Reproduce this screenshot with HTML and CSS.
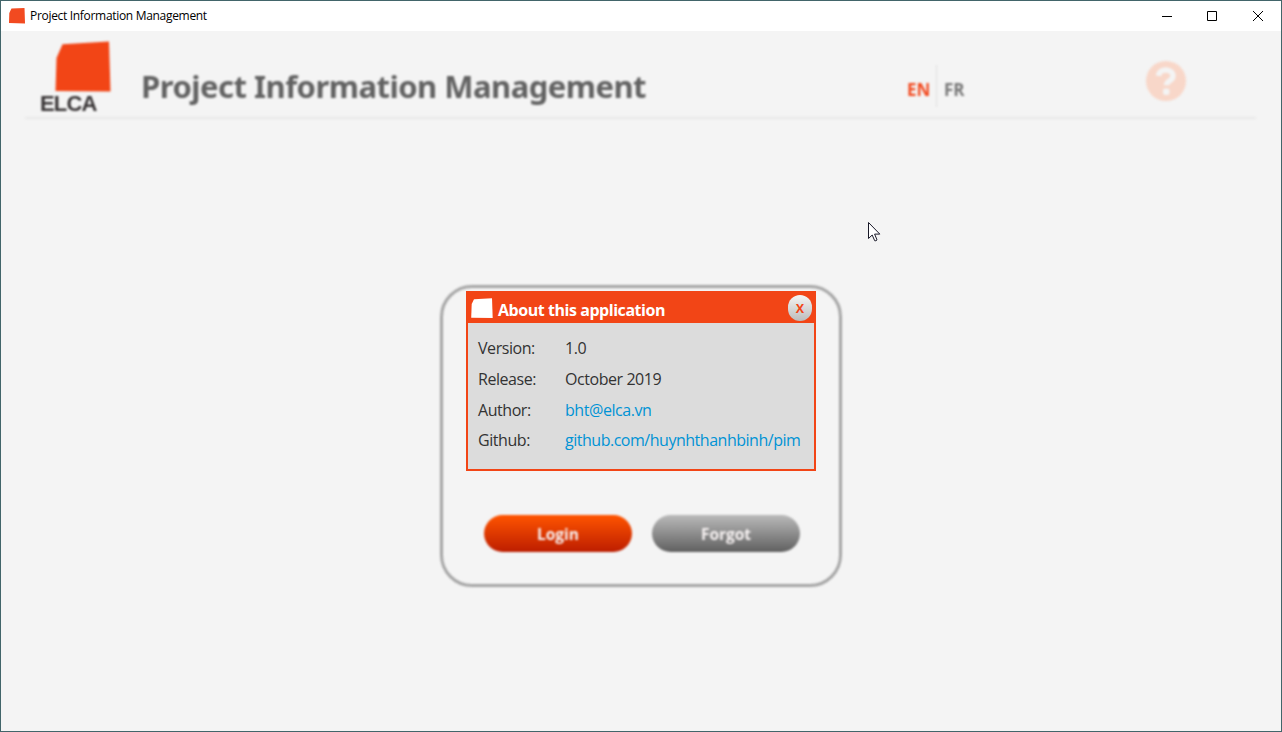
FILE: index.html
```html
<!DOCTYPE html>
<html lang="en">
<head>
<meta charset="utf-8">
<title>Project Information Management</title>
<link rel="stylesheet" href="styles.css">
</head>
<body>
<div class="window">
  <div class="titlebar">
    <svg class="app-icon" width="16" height="16" viewBox="0 0 16 16"><path d="M2.5 .5 15.5 0 16 15.500 0 15 .3 5Z"/></svg>
    <span class="window-title">Project Information Management</span>
    <div class="controls">
      <svg width="46" height="29" viewBox="0 0 46 29"><path d="M19 14.5h10"/></svg>
      <svg width="46" height="29" viewBox="0 0 46 29"><path d="M18.500 9.500h9v9h-9z"/></svg>
      <svg width="46" height="29" viewBox="0 0 46 29"><path d="m18 9 10 10M28 9 18 19"/></svg>
    </div>
  </div>
  <div class="content">
    <header class="header">
      <div class="logo">
        <svg width="56" height="51" viewBox="0 0 56 51"><path d="M7.500 3.300 54 .5 55.500 50.500.5 50 1.500 17Z"/></svg>
        <span class="logo-name">ELCA</span>
      </div>
      <h1 class="heading">Project Information Management</h1>
      <div class="languages"><span class="lang lang-active">EN</span><span class="lang lang-other">FR</span></div>
      <svg class="help" width="40" height="40" viewBox="0 0 40 40"><circle cx="20" cy="20" r="20"/><path class="help-hook" d="M12.500 14.800C13.500 6.500 27 7.500 27 15 27 20 20.500 19.500 20.500 24.200"/><rect class="help-dot" x="17" y="27.500" width="6.500" height="6.500" rx="2"/></svg>
    </header>
    <main class="main">
      <section class="login-card">
        <button class="button button-login">Login</button>
        <button class="button button-forgot">Forgot</button>
      </section>
    </main>
  </div>
  <section class="dialog">
    <div class="dialog-head">
      <svg width="22" height="20" viewBox="0 0 22 20"><path d="M3 1.200 21 .2 21.700 20 .2 19.700.7 6Z"/></svg>
      <h2 class="dialog-title">About this application</h2>
      <button class="close">X</button>
    </div>
    <div class="details">
      <span>Version:</span><span>1.0</span>
      <span>Release:</span><span>October 2019</span>
      <span>Author:</span><a>bht@elca.vn</a>
      <span>Github:</span><a class="repo">github.com/huynhthanhbinh/pim</a>
    </div>
  </section>
  <svg class="cursor" width="13" height="20" viewBox="0 0 13 20"><path d="M.5.5v16l3.700-3.500 2.500 5.700q1.200.500 2.300-.8L6.600 12.100h5.200Z"/></svg>
</div>
</body>
</html>
```
FILE: styles.css
```css
* { box-sizing: border-box; }
body { margin: 0; font-family: "Open Sans", "Noto Sans", sans-serif; }
.window { position: relative; width: 1282px; height: 732px; border: 1px solid #42656a; background: #f4f4f4; overflow: hidden; }
.titlebar { height: 30px; display: flex; align-items: center; background: #fff; padding-left: 8px; }
.app-icon { fill: #f24a20; margin-right: 5px; }
.window-title { padding-bottom: 2px; font-size: 12px; color: #000; letter-spacing: -.31px; white-space: nowrap; }
.controls { display: flex; margin-left: auto; }
.controls path { fill: none; stroke: #000; stroke-width: 1; }
.content { filter: blur(1px); }
.header { display: flex; align-items: flex-start; height: 88px; margin: 0 25px 0 24px; padding-left: 15px; border-bottom: 2px solid #eaeaea; }
.logo { width: 71px; padding-top: 10px; display: flex; flex-direction: column; }
.logo svg { margin-left: 15px; fill: #f24516; }
.logo-name { font: bold 22px/24px "Liberation Sans", sans-serif; letter-spacing: -.8px; color: #373334; }
.heading { width: 510px; margin: 33px 0 0 30px; font: bold 31px/44px "Noto Sans", sans-serif; letter-spacing: -.52px; color: #626262; white-space: nowrap; }
.languages { display: flex; margin: 34px 0 0 256px; height: 42px; font-size: 17px; font-weight: bold; line-height: 50px; }
.lang { width: 30px; }
.lang-active { color: #f24a20; border-right: 1px solid #e1e1e1; }
.lang-other { width: 40px; padding-left: 7px; color: #777; }
.help { margin: 30px 70px 0 auto; fill: #f8d7c9; }
.help-hook { fill: none; stroke: #f4f4f4; stroke-width: 5.500; }
.help-dot { fill: #f4f4f4; }
.main { display: flex; justify-content: center; padding-top: 166px; }
.login-card { width: 402px; height: 302px; border: 3px solid #a5a5a5; border-radius: 32px; display: flex; justify-content: center; align-items: flex-end; gap: 20px; padding: 0 0 32px 2px; }
.button { width: 148px; height: 37px; border: 0; border-radius: 19px; color: #f8f3f3; font: bold 15.500px/38px "Open Sans", sans-serif; padding: 0; }
.button-login { background: linear-gradient(#ff5500, #bd1d00); }
.button-forgot { background: linear-gradient(#bababa, #606060); }
.dialog { position: absolute; left: 465px; top: 290px; width: 350px; height: 180px; border: 2px solid #f24516; background: #dcdcdc; }
.dialog-head { height: 30px; display: flex; align-items: center; padding: 0 2px 0 3px; background: #f24516; }
.dialog-head svg { fill: #fff; }
.dialog-title { margin: 4px 0 0 5px; font-size: 16px; line-height: 22px; letter-spacing: -.45px; color: #fff; white-space: nowrap; }
.close { width: 24px; height: 26px; margin-left: auto; border: 0; border-radius: 12px; padding: 1px 0 0; background: linear-gradient(#f5f5f5, #bcbcbc); color: #f24516; font: bold 12.500px/25px "Open Sans", sans-serif; }
.details { display: grid; grid-template-columns: 87px auto; grid-auto-rows: 30.600px; padding: 10.400px 0 0 10px; font-size: 16px; line-height: 31px; letter-spacing: -.44px; color: #333; white-space: nowrap; }
.details a { color: #0093d5; }
.details .repo { letter-spacing: -.48px; }
.cursor { position: absolute; left: 867px; top: 221px; fill: #fff; stroke: #181827; stroke-width: 1; }
```
